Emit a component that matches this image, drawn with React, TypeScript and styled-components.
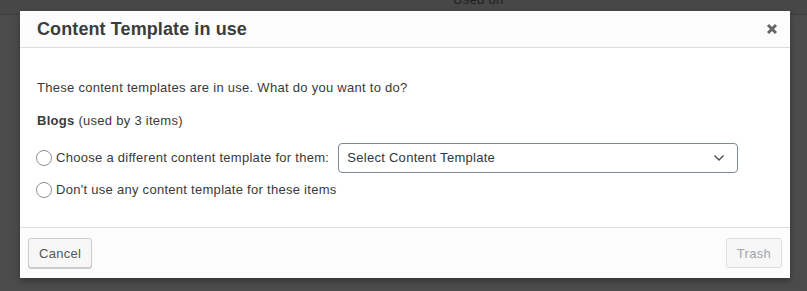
import React from "react";
import styled, { createGlobalStyle } from "styled-components";

const Global = createGlobalStyle`
  html, body { margin: 0; padding: 0; }
  body {
    width: 807px;
    height: 291px;
    overflow: hidden;
    background: #4b4b4b;
    font-family: "Liberation Sans", Arial, sans-serif;
  }
`;

const Page = styled.div`
  position: relative;
  width: 807px;
  height: 291px;
  background: #4b4b4b;
`;

const AdminBar = styled.div`
  height: 14px;
  background: #474747;
  border-bottom: 1px solid #3e3e3e;
  display: flex;
  align-items: flex-start;
  padding-left: 453px;
  overflow: hidden;
`;

const BarText = styled.span`
  font-size: 13px;
  color: #1f1f1f;
  line-height: 13px;
  letter-spacing: 0.3px;
  margin-top: -7px;
`;

const Modal = styled.div`
  position: absolute;
  left: 20px;
  top: 11px;
  width: 770px;
  height: 267px;
  background: #fff;
  box-shadow: 0 3px 6px rgba(0, 0, 0, 0.3);
  display: flex;
  flex-direction: column;
`;

const Header = styled.div`
  height: 36px;
  background: #fcfcfc;
  border-bottom: 1px solid #dddddd;
  display: flex;
  align-items: center;
  justify-content: space-between;
  padding: 0 12px 0 17px;
`;

const Title = styled.h1`
  margin: 0;
  font-size: 18px;
  font-weight: 700;
  color: #3c3c3c;
  letter-spacing: 0.1px;
`;

const Close = styled.button`
  border: none;
  background: transparent;
  padding: 0;
  width: 12px;
  height: 12px;
  display: flex;
  align-items: center;
  justify-content: center;
  cursor: pointer;
`;

const Body = styled.div`
  flex: 1;
  padding: 31px 17px 0 17px;
  display: flex;
  flex-direction: column;
  color: #3a3a3a;
  font-size: 13px;
  letter-spacing: 0.28px;
`;

const Para = styled.p`
  margin: 0 0 15px;
  line-height: 18px;
`;

const Group = styled.p`
  margin: 0 0 13px;
  line-height: 18px;
`;

const Options = styled.div`
  display: flex;
  flex-direction: column;
  gap: 2px;
`;

const OptionRow = styled.label`
  display: flex;
  align-items: center;
  gap: 4px;
  min-height: 30px;
  line-height: 18px;
`;

const Radio = styled.span`
  width: 16px;
  height: 16px;
  box-sizing: border-box;
  border: 1px solid #8c8f94;
  border-radius: 50%;
  background: #fff;
  margin-left: -1px;
  flex-shrink: 0;
`;

const Select = styled.div`
  margin-left: 5px;
  width: 400px;
  height: 30px;
  box-sizing: border-box;
  border: 1px solid #7e8993;
  border-radius: 4px;
  display: flex;
  align-items: center;
  justify-content: space-between;
  padding: 0 12px 0 8px;
  color: #32373c;
  font-size: 13px;
  background: #fff;
`;

const Footer = styled.div`
  height: 50px;
  background: #fcfcfc;
  border-top: 1px solid #dddddd;
  display: flex;
  align-items: center;
  justify-content: space-between;
  padding: 0 8px;
`;

const Button = styled.button<{ $disabled?: boolean }>`
  height: 30px;
  box-sizing: border-box;
  padding: 0 10px;
  font-family: inherit;
  font-size: 13px;
  letter-spacing: 0.28px;
  border-radius: 3px;
  border: 1px solid ${(p) => (p.$disabled ? "#dddddd" : "#cccccc")};
  background: #f7f7f7;
  color: ${(p) => (p.$disabled ? "#a0a5aa" : "#555555")};
  box-shadow: ${(p) => (p.$disabled ? "none" : "0 1px 0 #cccccc")};
  cursor: ${(p) => (p.$disabled ? "default" : "pointer")};
`;

export default function App() {
  return (
    <>
      <Global />
      <Page>
        <AdminBar>
          <BarText>Used on</BarText>
        </AdminBar>
        <Modal>
          <Header>
            <Title>Content Template in use</Title>
            <Close aria-label="Close">
              <svg width="12" height="12" viewBox="0 0 12 12">
                <path
                  d="M2 2 L10 10 M10 2 L2 10"
                  stroke="#666"
                  strokeWidth="3"
                  strokeLinecap="butt"
                />
              </svg>
            </Close>
          </Header>
          <Body>
            <Para>These content templates are in use. What do you want to do?</Para>
            <Group>
              <b>Blogs</b> (used by 3 items)
            </Group>
            <Options>
              <OptionRow>
                <Radio />
                Choose a different content template for them:
                <Select>
                  <span>Select Content Template</span>
                  <svg width="12" height="8" viewBox="0 0 12 8">
                    <path d="M1.5 1.5 L6 6 L10.5 1.5" fill="none" stroke="#555" strokeWidth="1.5" />
                  </svg>
                </Select>
              </OptionRow>
              <OptionRow>
                <Radio />
                Don't use any content template for these items
              </OptionRow>
            </Options>
          </Body>
          <Footer>
            <Button>Cancel</Button>
            <Button $disabled>Trash</Button>
          </Footer>
        </Modal>
      </Page>
    </>
  );
}
